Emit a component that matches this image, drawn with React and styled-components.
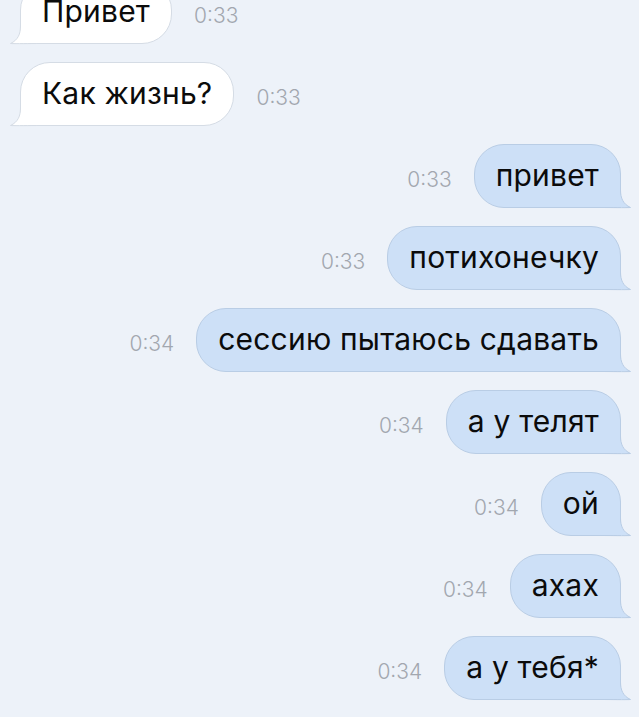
import React from "react";
import styled, { createGlobalStyle } from "styled-components";

const GlobalStyle = createGlobalStyle`
  html, body {
    margin: 0;
    padding: 0;
    background: #edf2f9;
    overflow: hidden;
  }
  body {
    font-family: Inter, "Liberation Sans", sans-serif;
    -webkit-font-smoothing: antialiased;
  }
`;

const Screen = styled.div`
  width: 639px;
  height: 717px;
  overflow: hidden;
  background: #edf2f9;
`;

const List = styled.div`
  display: flex;
  flex-direction: column;
  gap: 18px;
  margin-top: -20px;
  padding: 0 18px 0 20px;
`;

const Row = styled.div`
  display: flex;
  align-items: center;
  gap: 22px;
  justify-content: ${(p) => (p.$out ? "flex-end" : "flex-start")};
`;

const Bubble = styled.div`
  position: relative;
  box-sizing: border-box;
  height: 64px;
  display: flex;
  align-items: center;
  padding: 0 21px 2px;
  border-radius: 30px;
  border: 1px solid ${(p) => (p.$out ? "#b9cde5" : "#d5dce5")};
  background: ${(p) => (p.$out ? "#cde0f7" : "#ffffff")};
  color: #0b0b0b;
  font-size: 30px;
  letter-spacing: 0.2px;
  white-space: nowrap;
  ${(p) =>
    p.$out ? "border-bottom-right-radius: 0;" : "border-bottom-left-radius: 0;"}
`;

const TailSvg = styled.svg`
  position: absolute;
  bottom: -1px;
  width: 30px;
  height: 30px;
  overflow: visible;
  ${(p) =>
    p.$out ? "right: -11px;" : "left: -11px; transform: scaleX(-1);"}
`;

const Time = styled.span`
  font-size: 21px;
  font-weight: 300;
  color: #a2a7af;
  padding-top: 6px;
  order: ${(p) => (p.$out ? -1 : 1)};
`;

const Tail = ({ out }) => {
  const fill = out ? "#cde0f7" : "#ffffff";
  const stroke = out ? "#b9cde5" : "#d5dce5";
  return (
    <TailSvg $out={out} viewBox="0 0 30 30">
      <path
        d="M0 0 L19.5 0 L19.5 12 C19.5 20 22 26 29.5 29.5 L0 29.5 Z"
        fill={fill}
      />
      <path
        d="M19.5 0 L19.5 12 C19.5 20 22 26 29.5 29.5 C24 29.8 10 29.5 0 29.5"
        fill="none"
        stroke={stroke}
        strokeWidth="1"
      />
    </TailSvg>
  );
};

const messages = [
  { text: "Привет", time: "0:33", out: false },
  { text: "Как жизнь?", time: "0:33", out: false },
  { text: "привет", time: "0:33", out: true },
  { text: "потихонечку", time: "0:33", out: true },
  { text: "сессию пытаюсь сдавать", time: "0:34", out: true },
  { text: "а у телят", time: "0:34", out: true },
  { text: "ой", time: "0:34", out: true },
  { text: "ахах", time: "0:34", out: true },
  { text: "а у тебя*", time: "0:34", out: true },
];

export default function App() {
  return (
    <Screen>
      <GlobalStyle />
      <List>
        {messages.map((m, i) => (
          <Row key={i} $out={m.out}>
            <Bubble $out={m.out}>
              {m.text}
              <Tail out={m.out} />
            </Bubble>
            <Time $out={m.out}>{m.time}</Time>
          </Row>
        ))}
      </List>
    </Screen>
  );
}
